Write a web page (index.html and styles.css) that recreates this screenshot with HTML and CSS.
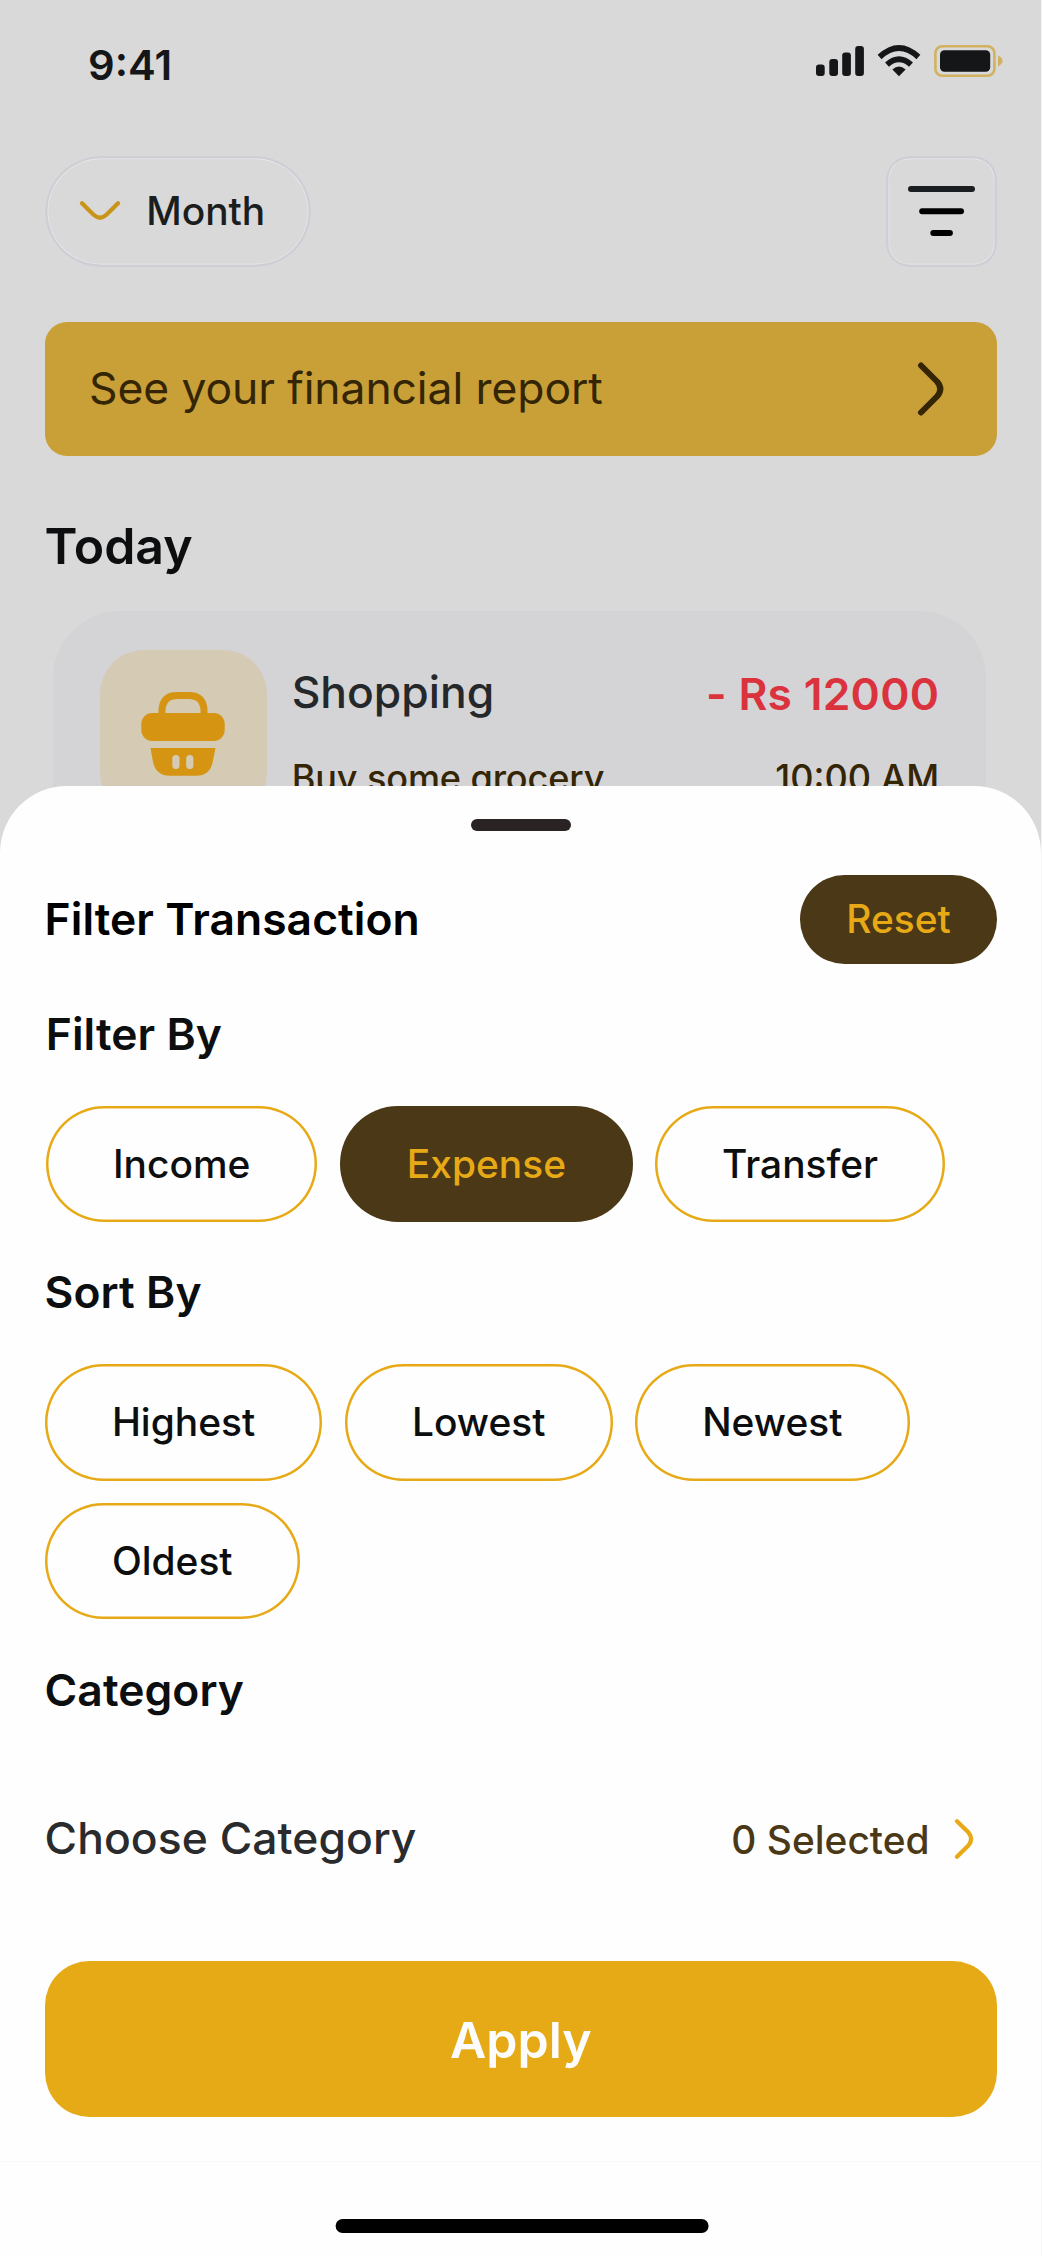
FILE: index.html
```html
<!DOCTYPE html>
<html lang="en">
<head>
<meta charset="utf-8">
<title>Filter Transaction</title>
<link rel="stylesheet" href="styles.css">
</head>
<body>
<div class="screen">
  <main class="page">
    <header class="status">
      <span class="time">9:41</span>
      <svg class="status-icons" width="190" height="36" viewBox="0 0 190 36">
        <g fill="#141618">
          <rect x="2" y="21.5" width="8.7" height="11.5" rx="3"/>
          <rect x="15.3" y="16" width="8.7" height="17" rx="3"/>
          <rect x="28.2" y="9.5" width="8.7" height="23.5" rx="3"/>
          <rect x="41.2" y="3" width="8.7" height="30" rx="3"/>
          <path d="M85 33.2 L78.4 26.6 Q85 20.6 91.6 26.6 Z"/>
        </g>
        <g fill="none" stroke="#141618" stroke-width="5.8">
          <path d="M73 21.6 Q85 11 97 21.6"/>
          <path d="M65.6 14 Q85 -4 104.4 14"/>
        </g>
        <rect x="121.4" y="3.2" width="59" height="29.6" rx="7" fill="none" stroke="#d2b260" stroke-width="2.6"/>
        <rect x="126" y="7.2" width="50.2" height="21.6" rx="4.5" fill="#141618"/>
        <path d="M184 12.4 Q188.6 14.5 188.6 17.8 Q188.6 21.2 184 23.4 Z" fill="#d2b260"/>
      </svg>
    </header>
    <div class="toolbar">
      <button class="month">
        <svg width="42" height="22" viewBox="0 0 42 22" fill="none" stroke="#c8941a" stroke-width="4.2" stroke-linecap="round" stroke-linejoin="round"><path d="M3 3.2 L14.6 14.8 Q21 20.6 27.4 14.8 L39 3.2"/></svg>
        <span>Month</span>
      </button>
      <button class="filter" aria-label="Filter">
        <svg width="67" height="50" viewBox="0 0 67 50"><rect width="67" height="6" rx="3" fill="#1b1e20"/><rect x="11.2" y="22.2" width="44.8" height="6" rx="3"/><rect x="22.3" y="44" width="22.6" height="6" rx="3"/></svg>
      </button>
    </div>
    <a class="report">
      <span>See your financial report</span>
      <svg width="28" height="56" viewBox="0 0 28 56" fill="none" stroke="#342504" stroke-width="6" stroke-linecap="round" stroke-linejoin="round"><path d="M4 4.5 L20 20.5 Q26.6 28 20 35.5 L4 51.5"/></svg>
    </a>
    <h1 class="today">Today</h1>
    <article class="card">
      <div class="thumb">
        <svg width="84" height="84" viewBox="0 0 84 84" fill="#d59412">
          <path d="M21 22 V18 Q22 3.6 36 3.6 H48 Q62 3.6 63 18 V22" fill="none" stroke="#d59412" stroke-width="7"/>
          <rect x="0.3" y="21" width="83.4" height="28" rx="11"/>
          <path fill-rule="evenodd" d="M9.5 56 H74.5 L71.7 70 Q69 83.8 55 83.8 H29 Q15 83.8 12 70 Z M31.3 66.5 V73.5 A3.6 3.6 0 0 0 38.5 73.5 V66.5 A3.6 3.6 0 0 0 31.3 66.5 Z M45.2 66.5 V73.5 A3.6 3.6 0 0 0 52.4 73.5 V66.5 A3.6 3.6 0 0 0 45.2 66.5 Z"/>
        </svg>
      </div>
      <div class="info">
        <div class="line"><span class="name">Shopping</span><span class="amount">- Rs 12000</span></div>
        <div class="line sub"><span class="note">Buy some grocery</span><span>10:00 AM</span></div>
      </div>
    </article>
  </main>

  <section class="sheet">
    <div class="grip"></div>
    <div class="sheet-head">
      <h2 class="sheet-title">Filter Transaction</h2>
      <button class="reset">Reset</button>
    </div>
    <h2 class="label first">Filter By</h2>
    <div class="chips first">
      <button class="chip">Income</button>
      <button class="chip active">Expense</button>
      <button class="chip">Transfer</button>
    </div>
    <h2 class="label">Sort By</h2>
    <div class="chips">
      <button class="chip">Highest</button>
      <button class="chip">Lowest</button>
      <button class="chip">Newest</button>
      <button class="chip">Oldest</button>
    </div>
    <h2 class="label">Category</h2>
    <div class="choose">
      <span class="choose-label">Choose Category</span>
      <span class="selected">0 Selected</span>
      <svg width="20" height="42" viewBox="0 0 20 42" fill="none" stroke="#e7aa16" stroke-width="4.2" stroke-linecap="round" stroke-linejoin="round"><path d="M3 3.2 L14.6 14.6 Q19.6 21 14.6 27.2 L3 38.8"/></svg>
    </div>
    <button class="apply">Apply</button>
    <footer class="home"><div class="home-bar"></div></footer>
  </section>
</div>
</body>
</html>
```
FILE: styles.css
```css
* { box-sizing: border-box; }
body { margin: 0; background: #f4f4f4; font-family: Inter, sans-serif; color: #0d0e0f; }
h1, h2 { margin: 0; font-weight: 600; }
button { font: inherit; border: 0; background: none; padding: 0; color: inherit; }
svg { display: block; flex: none; }

.screen { position: relative; width: 1041px; height: 2256px; overflow: hidden; background: #d9d9d9; }

.page { padding: 0 44px 0 44.6px; }
.status { display: flex; justify-content: space-between; height: 155.5px; padding: 40.4px 0 0 43.4px; }
.time { font-size: 41.7px; line-height: 50px; font-weight: 600; color: #141618; }
.status-icons { margin: 2.6px -6.6px 0 0; }

.toolbar { display: flex; justify-content: space-between; height: 111.2px; }
.month { display: flex; align-items: center; gap: 25px; width: 266.6px; padding: 0 0 1px 34.6px; border-radius: 56px; font-size: 38.9px; font-weight: 500; color: #1b1e20; }
.month, .filter { box-shadow: inset 0 0 0 2.6px #cfced5, inset 0 0 0 3.2px #ececee; }
.filter { display: grid; place-items: center; width: 111.2px; border-radius: 23px; }

.report { display: flex; align-items: center; justify-content: space-between; height: 133.4px; margin-top: 55.5px; padding: 0 52px 0 44.4px; border-radius: 22px; background: #c99f38; color: #342504; font-size: 44.4px; letter-spacing: -0.06px; }
.report span { padding-bottom: 2px; }
.today { margin-top: 60.6px; font-size: 50px; line-height: 60px; }

.card { display: flex; gap: 25px; height: 245px; margin: 35px 10.8px 0 8.4px; padding: 39px 47px 39px 47px; border-radius: 67px; background: #d4d4d6; }
.thumb { display: grid; place-items: center; width: 166.7px; height: 166.7px; border-radius: 44px; background: #d5cab4; }
.info { flex: 1; padding-top: 15px; }
.line { display: flex; justify-content: space-between; font-size: 44.4px; line-height: 54px; font-weight: 500; color: #25282a; }
.amount { padding-top: 1.4px; margin-bottom: -1.4px; letter-spacing: 0.25px; font-weight: 600; color: #db333e; }
.sub { margin-top: 32px; font-size: 36.1px; color: #342504; }
.note { letter-spacing: -0.12px; }

/* Bottom sheet laid over the transactions page */
.sheet { position: absolute; left: 0; top: 786px; width: 100%; height: 1470px; padding: 33px 44px 0 44.6px; border-radius: 67px 67px 0 0; background: #fefefe; }
.grip { width: 100px; height: 11.6px; margin: 0 auto; border-radius: 6px; background: #292324; }
.sheet-head { display: flex; align-items: center; justify-content: space-between; height: 89px; margin-top: 44.4px; }
.sheet-title { padding-bottom: 1px; font-size: 44.4px; letter-spacing: 0.06px; color: #000; }
.reset { width: 197px; height: 89px; padding-bottom: 1px; border-radius: 44.5px; background: #4a3816; color: #e7aa16; font-size: 38.9px; font-weight: 500; }
.label { margin-top: 43.2px; font-size: 44.4px; line-height: 54px; letter-spacing: 0.06px; }
.label.first { padding-left: 1.2px; }
.chips { display: flex; flex-wrap: wrap; gap: 22.2px; margin-top: 44.4px; }
.chips.first { padding-left: 1.2px; }
.chip { height: 116.7px; padding: 0 67.3px 1.4px; border-radius: 58.4px; box-shadow: inset 0 0 0 2.5px #e7aa16; font-size: 38.9px; font-weight: 500; }
.chips.first .chip { padding: 0 67.2px; }
.chips.first .chip:last-child { padding: 0 66.6px; }
.chip.active { background: #4a3816; box-shadow: none; color: #e7aa16; }
.choose { display: flex; align-items: center; height: 67px; margin-top: 89px; padding-right: 23.4px; font-size: 44.4px; font-weight: 500; color: #292b2d; }
.choose-label { flex: 1; padding-bottom: 2px; letter-spacing: 0.06px; }
.selected { margin-right: 24px; font-size: 38.9px; color: #4a3816; }
.apply { width: 100%; height: 155.6px; margin-top: 88.4px; padding-top: 2px; border-radius: 44.4px; background: #e6aa16; color: #fcfcfc; font-size: 50px; font-weight: 600; }
.home { margin: 44.4px -44px 0 -44.6px; padding-top: 57px; height: 94px; border-top: 1px solid #fafafa; }
.home-bar { width: 372.4px; height: 14.2px; margin: 0 auto; border-radius: 7.1px; background: #000; transform: translateX(1.6px); }
```
